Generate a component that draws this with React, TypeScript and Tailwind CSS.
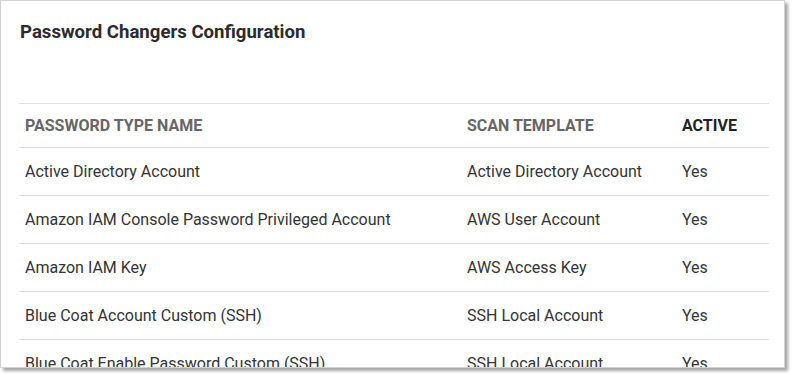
const ROWS = [
  { name: "Active Directory Account", template: "Active Directory Account", active: "Yes" },
  { name: "Amazon IAM Console Password Privileged Account", template: "AWS User Account", active: "Yes" },
  { name: "Amazon IAM Key", template: "AWS Access Key", active: "Yes" },
  { name: "Blue Coat Account Custom (SSH)", template: "SSH Local Account", active: "Yes" },
  { name: "Blue Coat Enable Password Custom (SSH)", template: "SSH Local Account", active: "Yes" },
];

export default function App() {
  return (
    <div className="w-[792px] h-[375px] bg-white font-['Roboto',sans-serif]">
      <div className="w-[785px] h-[368px] bg-white border border-[#d2d2d2] shadow-[3px_3px_3px_rgba(0,0,0,0.35)] overflow-hidden">
        <h1 className="pl-[19px] pt-[19px] text-[18.6px] leading-6 font-bold text-[#2b2b2b]">
          Password Changers Configuration
        </h1>

        <table className="ml-[18px] mt-[59px] w-[750px] border-collapse text-[16px] text-[#333]">
          <thead>
            <tr className="border-t border-b border-[#e0e0e0] h-[44px]">
              <th className="w-[442px] pl-[6px] text-left font-bold text-[#666] uppercase">Password Type Name</th>
              <th className="w-[215px] pl-[6px] text-left font-bold text-[#666] uppercase">Scan Template</th>
              <th className="pl-[6px] text-left font-bold text-[#222] uppercase">Active</th>
            </tr>
          </thead>
          <tbody>
            {ROWS.map((row) => (
              <tr key={row.name} className="border-b border-[#e0e0e0] h-[48px]">
                <td className="pl-[6px]">{row.name}</td>
                <td className="pl-[6px]">{row.template}</td>
                <td className="pl-[6px]">{row.active}</td>
              </tr>
            ))}
          </tbody>
        </table>
      </div>
    </div>
  );
}
